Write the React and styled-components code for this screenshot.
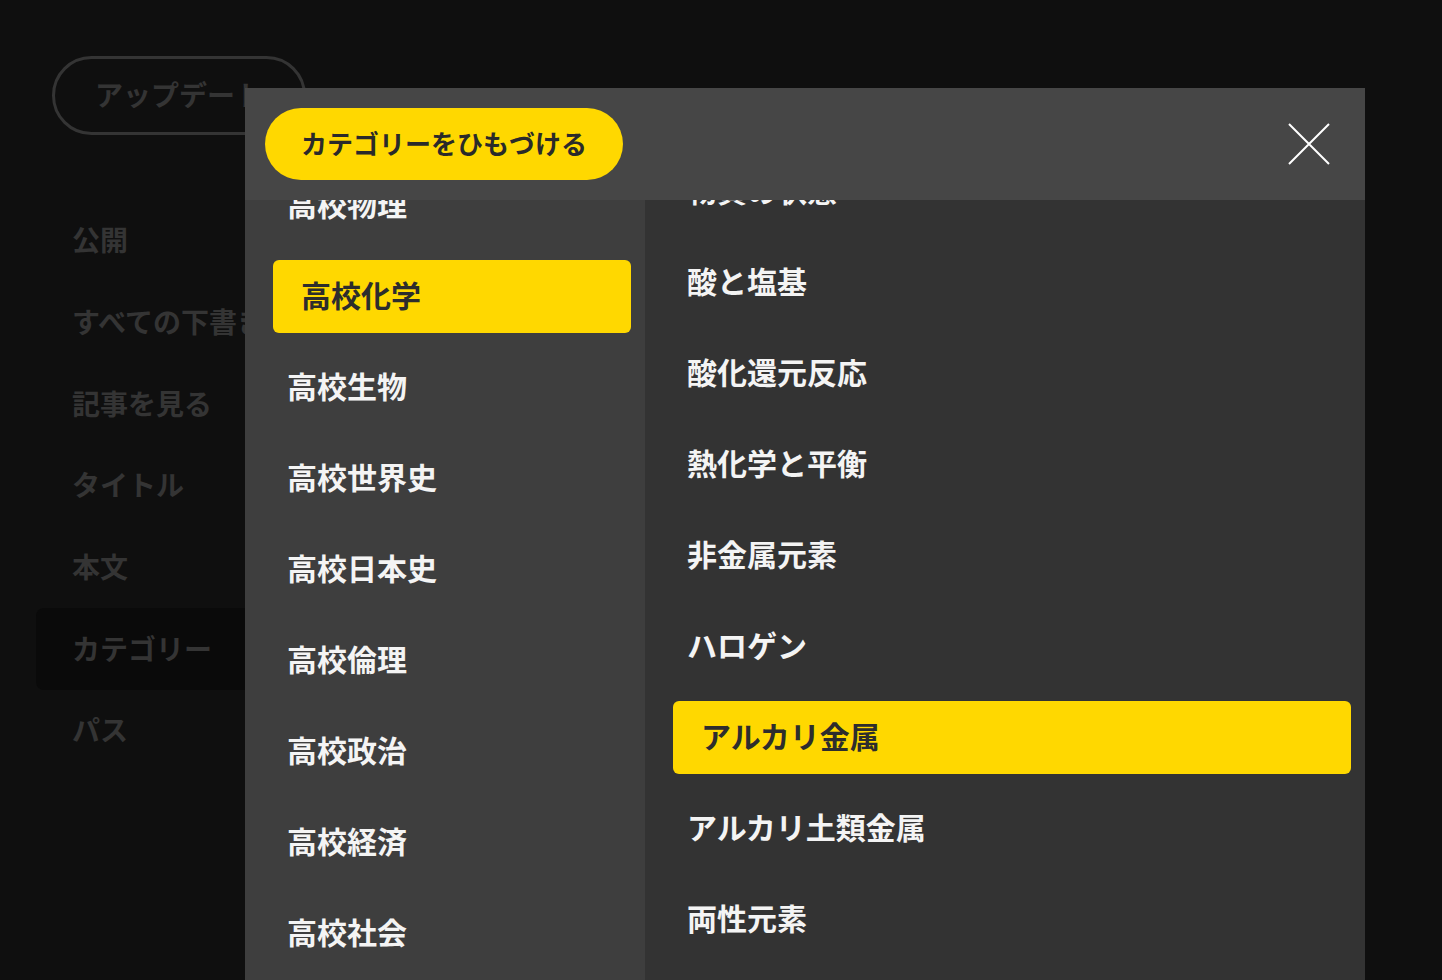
import React from "react";
import styled, { createGlobalStyle } from "styled-components";

const GlobalStyle = createGlobalStyle`
  html, body {
    margin: 0;
    padding: 0;
    background: #0f0f0f;
    overflow: hidden;
  }
  body {
    font-family: "Noto Sans CJK JP", "Noto Sans", sans-serif;
  }
  * { box-sizing: border-box; }
`;

const Page = styled.div`
  position: relative;
  width: 100%;
  height: 100vh;
  background: #0f0f0f;
  overflow: hidden;
`;

const SideColumn = styled.div`
  display: flex;
  flex-direction: column;
  align-items: flex-start;
  padding: 56px 0 0 36px;
  width: 420px;
`;

const UpdateButton = styled.button`
  margin-left: 16px;
  height: 79px;
  padding: 0 40px 4px 40px;
  border: 3px solid #343434;
  border-radius: 40px;
  background: transparent;
  color: #343434;
  font-family: inherit;
  font-size: 28px;
  font-weight: 700;
  white-space: nowrap;
`;

const Nav = styled.nav`
  display: flex;
  flex-direction: column;
  margin-top: 65px;
  width: 360px;
`;

const NavItem = styled.div`
  display: flex;
  align-items: center;
  height: 81.7px;
  padding: 0 0 3px 36px;
  border-radius: 8px;
  background: ${(p) => (p.$active ? "#0a0a0a" : "transparent")};
  color: #343434;
  font-size: 28px;
  font-weight: 700;
  white-space: nowrap;
`;

const Modal = styled.div`
  position: absolute;
  top: 88px;
  left: 245px;
  width: 1120px;
  bottom: 0;
  display: flex;
  flex-direction: column;
  overflow: hidden;
`;

const Header = styled.div`
  flex: none;
  height: 112px;
  display: flex;
  align-items: center;
  justify-content: space-between;
  padding: 0 35px 0 20px;
  background: #464646;
`;

const LinkButton = styled.button`
  height: 72px;
  padding: 0 36px 4px;
  border: none;
  border-radius: 36px;
  background: #ffd800;
  color: #2a2a2a;
  font-family: inherit;
  font-size: 26px;
  font-weight: 700;
  white-space: nowrap;
`;

const CloseButton = styled.button`
  width: 42px;
  height: 42px;
  padding: 0;
  border: none;
  background: transparent;
  display: flex;
  align-items: center;
  justify-content: center;
`;

const Body = styled.div`
  flex: 1;
  min-height: 0;
  display: grid;
  grid-template-columns: 400px 1fr;
`;

const Column = styled.div`
  overflow: hidden;
  padding: 0 14px 0 28px;
  background: ${(p) => p.$bg};
`;

const List = styled.ul`
  list-style: none;
  margin: ${(p) => p.$offset}px 0 0;
  padding: 0;
  display: flex;
  flex-direction: column;
  gap: 18px;
`;

const Item = styled.li`
  flex: none;
  height: 73px;
  display: flex;
  align-items: center;
  padding: 0 0 5px ${(p) => (p.$selected ? 28 : 14)}px;
  border-radius: 6px;
  background: ${(p) => (p.$selected ? "#ffd800" : "transparent")};
  color: ${(p) => (p.$selected ? "#2d2d2d" : "#f4f4f4")};
  font-size: 30px;
  font-weight: 700;
  white-space: nowrap;
`;

const navItems = ["公開", "すべての下書き", "記事を見る", "タイトル", "本文", "カテゴリー", "パス"];

const subjects = [
  "高校物理",
  "高校化学",
  "高校生物",
  "高校世界史",
  "高校日本史",
  "高校倫理",
  "高校政治",
  "高校経済",
  "高校社会",
  "高校地理",
];

const topics = [
  "物質の状態",
  "酸と塩基",
  "酸化還元反応",
  "熱化学と平衡",
  "非金属元素",
  "ハロゲン",
  "アルカリ金属",
  "アルカリ土類金属",
  "両性元素",
  "遷移元素",
];

export default function App() {
  return (
    <Page>
      <GlobalStyle />
      <SideColumn>
        <UpdateButton>アップデート</UpdateButton>
        <Nav>
          {navItems.map((n) => (
            <NavItem key={n} $active={n === "カテゴリー"}>
              {n}
            </NavItem>
          ))}
        </Nav>
      </SideColumn>

      <Modal>
        <Header>
          <LinkButton>カテゴリーをひもづける</LinkButton>
          <CloseButton aria-label="閉じる">
            <svg width="42" height="42" viewBox="0 0 42 42">
              <path d="M1 1 L41 41 M41 1 L1 41" stroke="#ffffff" strokeWidth="2" fill="none" />
            </svg>
          </CloseButton>
        </Header>
        <Body>
          <Column $bg="#3e3e3e">
            <List $offset={-31}>
              {subjects.map((s) => (
                <Item key={s} $selected={s === "高校化学"}>
                  {s}
                </Item>
              ))}
            </List>
          </Column>
          <Column $bg="#333333">
            <List $offset={-45}>
              {topics.map((t) => (
                <Item key={t} $selected={t === "アルカリ金属"}>
                  {t}
                </Item>
              ))}
            </List>
          </Column>
        </Body>
      </Modal>
    </Page>
  );
}
